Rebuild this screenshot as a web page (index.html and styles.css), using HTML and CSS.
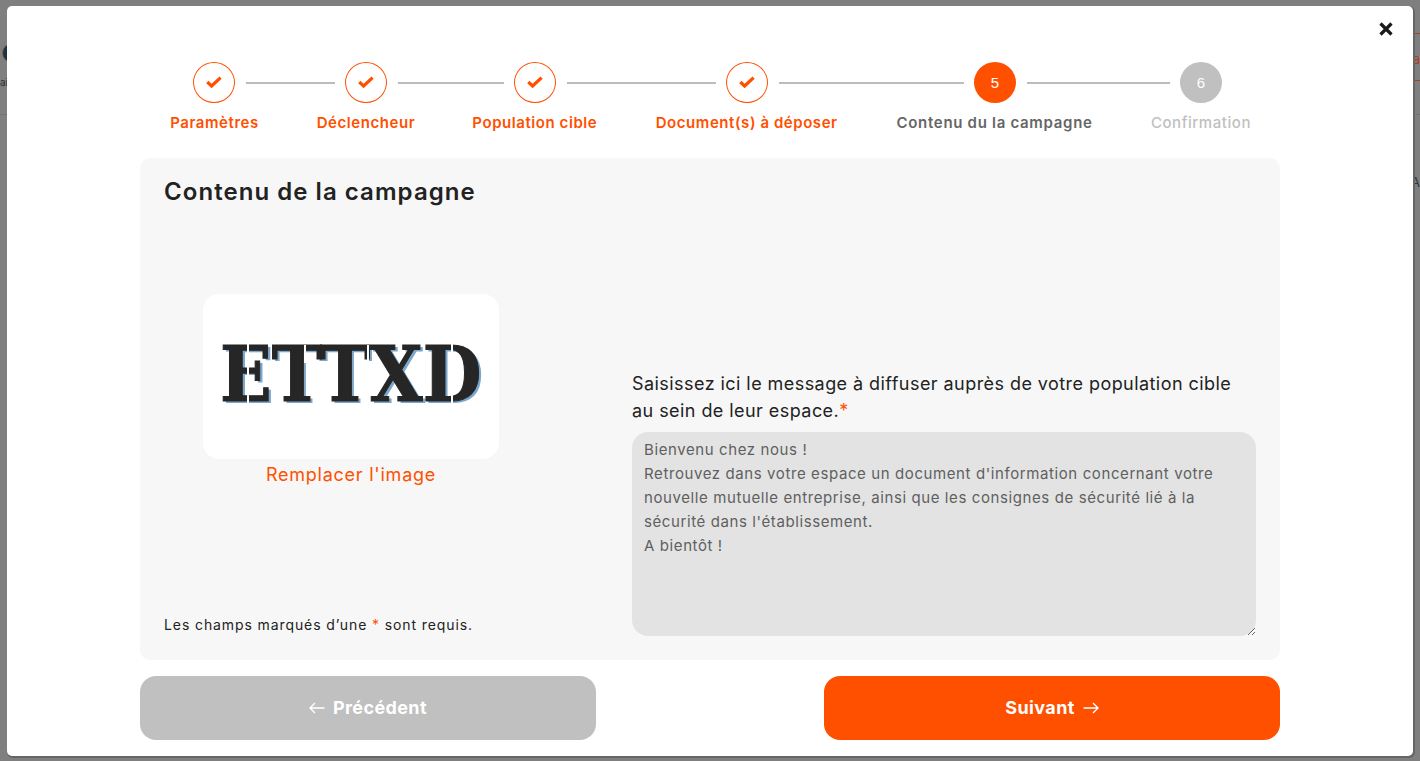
FILE: index.html
```html
<!DOCTYPE html>
<html lang="fr">
<head>
<meta charset="utf-8">
<title>Contenu de la campagne</title>
<link rel="stylesheet" href="styles.css">
</head>
<body>
<div class="page">
  <div class="behind">
    <span class="b-avatar"></span>
    <span class="b-rule"></span>
    <span class="b-orange b-orange-top"></span>
    <span class="b-orange b-orange-bottom"></span>
    <span class="b-text b-text-left">ai</span>
    <span class="b-text b-text-right">a</span>
    <span class="b-text b-text-a">A</span>
  </div>
  <main class="modal">
    <button class="close" type="button" aria-label="Fermer">
      <svg width="14" height="14" viewBox="0 0 14 14"><path d="M1.5 1.5L12.5 12.5M12.5 1.5L1.5 12.5" class="close-x"/></svg>
    </button>
    <div class="track">
      <span class="dot done"><svg width="16" height="12" viewBox="0 0 16 12"><polyline points="1.3,6 5.6,10 14.6,1.6" class="tick"/></svg></span>
      <span class="line"></span>
      <span class="dot done"><svg width="16" height="12" viewBox="0 0 16 12"><polyline points="1.3,6 5.6,10 14.6,1.6" class="tick"/></svg></span>
      <span class="line"></span>
      <span class="dot done"><svg width="16" height="12" viewBox="0 0 16 12"><polyline points="1.3,6 5.6,10 14.6,1.6" class="tick"/></svg></span>
      <span class="line"></span>
      <span class="dot done"><svg width="16" height="12" viewBox="0 0 16 12"><polyline points="1.3,6 5.6,10 14.6,1.6" class="tick"/></svg></span>
      <span class="line"></span>
      <span class="dot current">5</span>
      <span class="line"></span>
      <span class="dot todo">6</span>
    </div>
    <div class="labels">
      <span class="label l-done">Paramètres</span>
      <span class="label l-done">Déclencheur</span>
      <span class="label l-done">Population cible</span>
      <span class="label l-done">Document(s) à déposer</span>
      <span class="label l-current">Contenu du la campagne</span>
      <span class="label l-todo">Confirmation</span>
    </div>
    <section class="card">
      <h1 class="title">Contenu de la campagne</h1>
      <div class="columns">
        <div class="left">
          <div class="picture">
            <div class="image-box">
              <div class="logo">
                <span class="logo-text">ETTXD</span>
                <i class="cut cut-e"></i>
                <i class="cut cut-t1"></i>
                <i class="cut cut-t2"></i>
                <i class="cut cut-d"></i>
              </div>
            </div>
            <a class="replace" href="#">Remplacer l'image</a>
          </div>
          <p class="note">Les champs marqués d’une <span class="star">*</span> sont requis.</p>
        </div>
        <div class="right">
          <label class="msg-label" for="msg">Saisissez ici le message à diffuser auprès de votre population cible<br>au sein de leur espace.<span class="star">*</span></label>
          <textarea id="msg" class="msg" wrap="off" spellcheck="false">Bienvenu chez nous !
Retrouvez dans votre espace un document d'information concernant votre
nouvelle mutuelle entreprise, ainsi que les consignes de sécurité lié à la
sécurité dans l'établissement.
A bientôt !</textarea>
        </div>
      </div>
    </section>
    <div class="actions">
      <button class="btn btn-prev" type="button">
        <svg width="16" height="12" viewBox="0 0 16 12"><path d="M15.5 6H1M6 1L1 6L6 11" class="arrow"/></svg>
        Précédent
      </button>
      <button class="btn btn-next" type="button">
        Suivant
        <svg width="16" height="12" viewBox="0 0 16 12"><path d="M0.5 6H15M10 1L15 6L10 11" class="arrow"/></svg>
      </button>
    </div>
  </main>
</div>
</body>
</html>
```
FILE: styles.css
```css
* { box-sizing: border-box; }
html, body { margin: 0; height: 100%; overflow: hidden; }
body { font-family: Inter, "Noto Sans", "Liberation Sans", sans-serif; color: #222; }

.page {
  position: relative;
  height: 761px;
  background: #7f7f7f;
  padding: 6px 7px 5px;
}

/* Page dimmed behind the dialog */
.behind span { position: absolute; }
.b-avatar { left: 2px; top: 43px; width: 20px; height: 20px; border-radius: 50%; background: #1d3044; border: 1px solid #7a6440; }
.b-rule { left: 0; right: 0; top: 114px; height: 1px; background: #727272; }
.b-orange { right: 0; width: 7px; height: 1px; background: #a8421a; }
.b-orange-top { top: 33px; }
.b-orange-bottom { top: 80px; }
.b-text { font-size: 11px; line-height: 14px; color: #2d2d2d; }
.b-text-left { left: 0; top: 75px; font-size: 10px; }
.b-text-right { right: 0; top: 52px; font-size: 13px; color: #a8421a; }
.b-text-a { right: 0; top: 175px; font-size: 13px; color: #333; }

.modal {
  position: relative;
  height: 750px;
  background: #fff;
  border-radius: 5px;
  padding: 56px 133px 0;
  box-shadow: 1px 1px 0 1px #666;
}

.close {
  position: absolute;
  top: 16px;
  right: 20px;
  width: 14px;
  height: 14px;
  padding: 0;
  border: 0;
  background: none;
  display: flex;
}
.close-x { fill: none; stroke: #1a1a1a; stroke-width: 3.2; }

/* Stepper */
.track {
  display: grid;
  grid-template-columns: 42px 110px 42px 127px 42px 170px 42px 206px 42px 164px 42px;
  align-items: center;
  padding-left: 53px;
}
.dot {
  width: 42px;
  height: 41px;
  border-radius: 50%;
  display: flex;
  align-items: center;
  justify-content: center;
  font-size: 15px;
  font-family: "Liberation Sans", Arial, sans-serif;
  color: #fff;
}
.done { border: 1px solid #ff5000; background: #fff; padding-bottom: 2px; }
.current { background: #ff5000; }
.todo { background: #c0c0c0; }
.tick { fill: none; stroke: #ff5000; stroke-width: 3.3; }
.line { height: 2px; background: #bcbcbc; margin: 0 10px 0 11px; }

.labels {
  display: grid;
  grid-template-columns: 89px 97px 124px 183px 196px 100px;
  column-gap: 58.4px;
  padding-left: 30px;
  margin-top: 9px;
}
.label {
  font-size: 15px;
  line-height: 22px;
  font-weight: 600;
  letter-spacing: 0.56px;
  white-space: nowrap;
  display: flex;
  justify-content: center;
}
.l-done { color: #ff5000; }
.l-current { color: #666; letter-spacing: 0.7px; }
.l-todo { color: #c0c0c0; font-weight: 500; letter-spacing: 0.55px; }

/* Card */
.card {
  margin-top: 24px;
  height: 502px;
  background: #f7f7f7;
  border-radius: 10px;
  padding: 16px 24px 24px;
  display: flex;
  flex-direction: column;
}
.title {
  margin: 0;
  font-size: 24px;
  line-height: 36px;
  font-weight: 600;
  letter-spacing: 1.05px;
  color: #222;
}
.columns {
  flex: 1;
  display: grid;
  grid-template-columns: 374px 624px;
  column-gap: 94px;
  min-height: 0;
}
.left {
  display: flex;
  flex-direction: column;
  justify-content: space-between;
  padding-top: 84px;
}
.picture { display: flex; flex-direction: column; align-items: center; }
.image-box {
  width: 296px;
  height: 165px;
  background: #fff;
  border-radius: 16px;
  display: flex;
  align-items: center;
  justify-content: center;
  padding: 0 4px 5px 0;
}
.logo {
  position: relative;
  width: 258px;
  height: 66px;
  filter: blur(0.45px);
}
.logo-text {
  display: block;
  font: 700 56px/66px "DejaVu Serif", "Liberation Serif", serif;
  color: #262626;
  white-space: nowrap;
  -webkit-text-stroke: 0.8px #262626;
  text-shadow: 2.2px 1px 0 #7ba7cc;
  transform-origin: 0 50%;
  transform: scale(1.21, 1.36);
}
.cut { position: absolute; background: #fff; width: 2px; }
.cut-e { left: 27px; top: 0; height: 66px; }
.cut-t1 { left: 84px; top: 4px; height: 18px; }
.cut-t2 { left: 147px; top: 4px; height: 18px; }
.cut-d { left: 231px; top: 0; height: 66px; }
.replace {
  margin-top: 4px;
  font-size: 18px;
  line-height: 24px;
  letter-spacing: 0.76px;
  color: #ff5000;
  text-decoration: none;
}
.note { margin: 0 0 1px; font-size: 14px; line-height: 21px; letter-spacing: 0.9px; color: #222; }
.star { color: #ff5000; }

.right { display: flex; flex-direction: column; justify-content: flex-end; }
.msg-label {
  font-size: 18px;
  line-height: 27px;
  letter-spacing: 0.44px;
  color: #222;
  white-space: nowrap;
  margin-bottom: 8px;
}
.msg {
  display: block;
  width: 100%;
  height: 204px;
  border: 0;
  outline: 0;
  border-radius: 16px;
  background: #e3e3e3;
  padding: 6px 12px;
  font: 400 15px/24px Inter, "Noto Sans", sans-serif;
  letter-spacing: 0.6px;
  color: #5f5f5f;
  overflow: hidden;
  resize: vertical;
}

/* Buttons */
.actions {
  margin-top: 16px;
  display: flex;
  justify-content: space-between;
}
.btn {
  width: 456px;
  height: 64px;
  border: 0;
  border-radius: 16px;
  color: #fff;
  font: 700 18px/24px Inter, "Noto Sans", sans-serif;
  letter-spacing: 0.38px;
  display: flex;
  align-items: center;
  justify-content: center;
  gap: 8px;
}
.btn-prev { background: #c0c0c0; }
.btn-next { background: #ff5000; }
.arrow { fill: none; stroke: #fff; stroke-width: 1.4; }
```
